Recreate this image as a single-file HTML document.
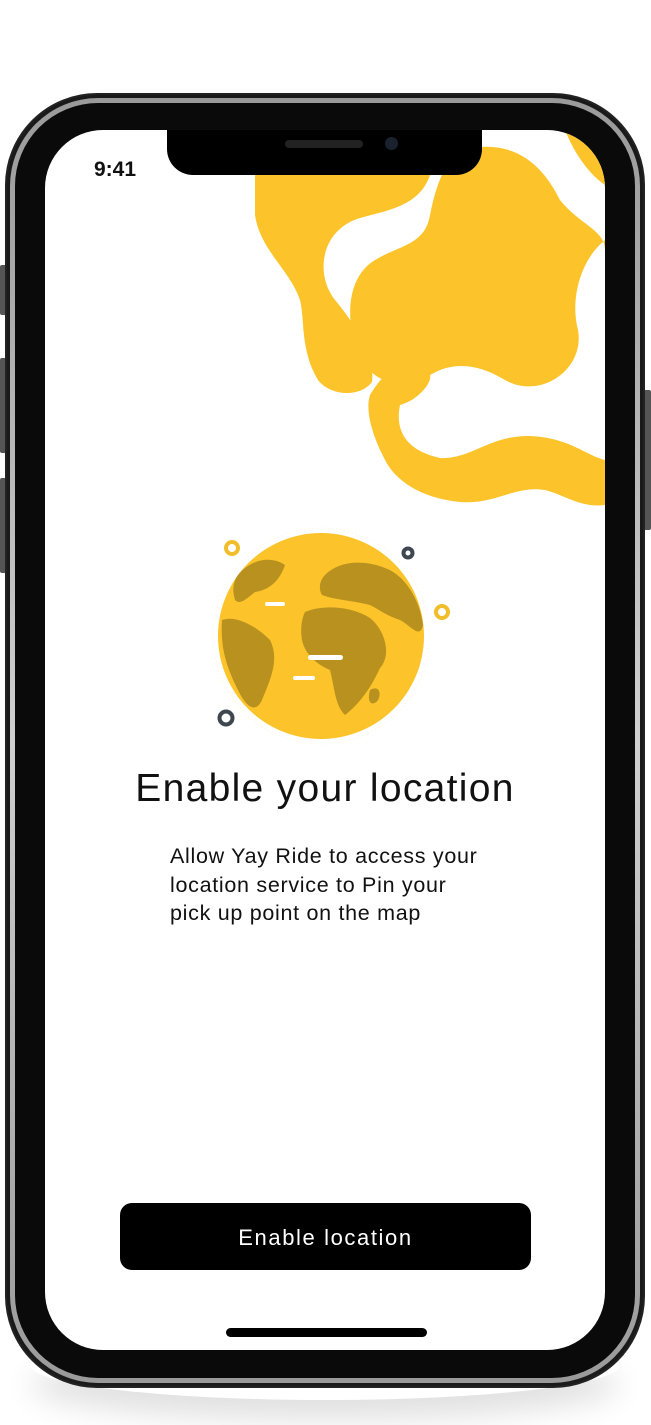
<!DOCTYPE html>
<html><head><meta charset="utf-8"><style>
html,body{margin:0;padding:0;background:#fff;width:651px;height:1425px;overflow:hidden;font-family:"Liberation Sans",sans-serif}
.abs{position:absolute}
</style></head><body>
<div class="abs" style="left:0;top:0;width:651px;height:1425px">
<div class="abs" style="left:30px;top:1330px;width:590px;height:70px;border-radius:50%;box-shadow:0 20px 30px rgba(0,0,0,0.12)"></div>
<div class="abs" style="left:0;top:265px;width:8px;height:50px;background:#555;border-radius:2px"></div>
<div class="abs" style="left:0;top:358px;width:8px;height:95px;background:#555;border-radius:2px"></div>
<div class="abs" style="left:0;top:478px;width:8px;height:95px;background:#555;border-radius:2px"></div>
<div class="abs" style="left:642px;top:390px;width:9px;height:140px;background:#555;border-radius:2px"></div>
<div class="abs" style="left:5px;top:93px;width:640px;height:1295px;border-radius:92px;background:#1a1a1a;box-sizing:border-box;border:2px solid #222"></div>
<div class="abs" style="left:10px;top:98px;width:630px;height:1285px;border-radius:88px;background:linear-gradient(180deg,#9a9a9a,#d0d0d0 50%,#9a9a9a)"></div>
<div class="abs" style="left:15px;top:103px;width:620px;height:1275px;border-radius:83px;background:#0a0a0a"></div>
<div class="abs" style="left:45px;top:130px;width:560px;height:1220px;border-radius:58px;background:#fff;overflow:hidden">
 <svg class="abs" style="left:0;top:0" width="560" height="400" viewBox="45 130 560 400">
  <g fill="#FCC42A">
   <path d="M255,175 L430,175 C420,205 390,210 360,218 C320,230 315,275 335,300 C360,330 375,360 372,382 C360,398 330,396 318,380 C300,350 305,320 300,300 C290,270 260,250 255,215 Z"/>
   <path d="M470,148 C520,140 545,170 560,200 C580,225 605,230 605,250 L605,240 C580,260 570,300 578,330 C585,370 540,400 505,380 C480,365 455,360 430,375 C400,395 365,380 355,345 C345,310 350,275 375,260 C400,245 425,245 430,215 C438,175 450,152 470,148 Z"/>
   <path d="M565,130 L605,130 L605,185 C590,175 575,155 565,130 Z"/>
   <path d="M370,395 C385,370 400,360 425,370 C440,375 420,400 400,405 C395,430 405,450 440,458 C470,460 490,435 530,436 C570,438 585,455 605,460 L605,505 C580,508 565,495 545,490 C515,485 495,505 460,502 C420,498 395,480 385,460 C372,435 365,410 370,395 Z"/>
  </g>
 </svg>
 <div class="abs" style="left:49px;top:28px;font-size:21px;font-weight:bold;color:#111">9:41</div>
 <div class="abs" style="left:122px;top:-2px;width:315px;height:47px;background:#000;border-radius:0 0 26px 26px"></div>
 <div class="abs" style="left:240px;top:10px;width:78px;height:8px;background:#222;border-radius:4px"></div>
 <div class="abs" style="left:340px;top:7px;width:13px;height:13px;background:#1a2230;border-radius:50%"></div>
 <svg class="abs" style="left:160px;top:395px" width="260" height="220" viewBox="205 525 260 220">
  <circle cx="321" cy="636" r="108" fill="none" stroke="#fdf3d0" stroke-dasharray="1 3"/>
  <circle cx="321" cy="636" r="103" fill="#FCC42A"/>
  <g fill="#B8911F">
   <path d="M238,575 C250,560 270,555 285,565 C280,580 270,590 255,592 C245,600 240,605 235,600 C232,590 233,582 238,575Z"/>
   <path d="M222,620 C235,615 255,625 270,640 C280,660 270,680 262,700 C255,715 245,705 238,690 C228,670 220,650 222,620Z"/>
   <path d="M325,575 C340,560 365,560 385,568 C405,575 420,600 423,625 C420,640 410,625 400,620 C385,615 380,610 370,605 C350,600 335,600 322,595 C318,588 320,580 325,575Z"/>
   <path d="M305,612 C320,605 350,605 370,618 C385,630 392,655 380,668 C370,690 358,705 345,715 C335,705 335,690 330,670 C318,665 305,655 302,640 C300,628 302,618 305,612Z"/>
   <path d="M370,690 C378,685 382,692 378,700 C374,706 366,705 370,690Z"/>
  </g>
  <g fill="#fff"><rect x="265" y="602" width="20" height="4" rx="2"/><rect x="308" y="655" width="35" height="5" rx="2.5"/><rect x="293" y="676" width="22" height="4" rx="2"/></g>
  <g fill="none" stroke-width="4">
   <circle cx="232" cy="548" r="6" stroke="#F2BD2B"/>
   <circle cx="442" cy="612" r="6" stroke="#F2BD2B"/>
   <circle cx="408" cy="553" r="4.5" stroke="#3e4650"/>
   <circle cx="226" cy="718" r="6.5" stroke="#3e4650"/>
  </g>
 </svg>
 <div class="abs" style="left:0;top:637px;width:560px;text-align:center;font-size:39px;letter-spacing:1.3px;color:#111">Enable your location</div>
 <div class="abs" style="left:125px;top:712px;width:380px;font-size:21.5px;letter-spacing:0.7px;line-height:28.5px;color:#111">Allow Yay Ride to access your<br>location service to Pin your<br>pick up point on the map</div>
 <div class="abs" style="left:75px;top:1073px;width:411px;height:67px;background:#000;border-radius:12px;color:#fff;font-size:22px;letter-spacing:1.6px;text-align:center;line-height:69px">Enable location</div>
 <div class="abs" style="left:181px;top:1198px;width:201px;height:9px;background:#000;border-radius:5px"></div>
</div>
</div>
</body></html>
